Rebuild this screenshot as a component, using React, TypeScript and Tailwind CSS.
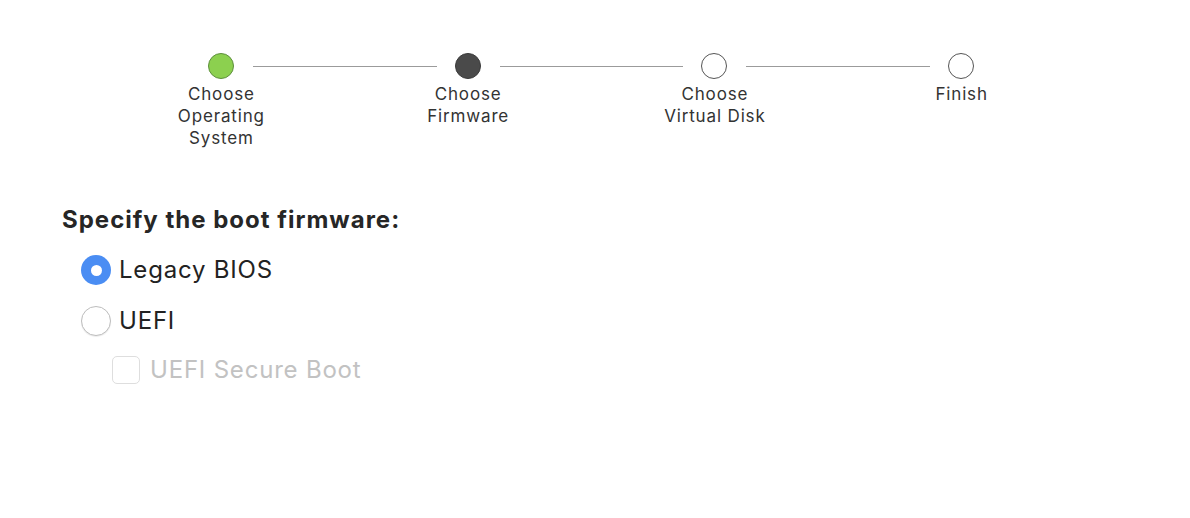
import React from "react";

const steps = [
  { label: ["Choose", "Operating", "System"], state: "done" },
  { label: ["Choose", "Firmware"], state: "current" },
  { label: ["Choose", "Virtual Disk"], state: "todo" },
  { label: ["Finish"], state: "todo" },
];

function StepDot({ state }: { state: string }) {
  if (state === "done") {
    return <div className="w-[26px] h-[26px] shrink-0 rounded-full bg-[#8cd04f] border border-[#5d8f3c]" />;
  }
  if (state === "current") {
    return <div className="w-[26px] h-[26px] shrink-0 rounded-full bg-[#4a4a4a] border border-[#3a3a3a]" />;
  }
  return <div className="w-[26px] h-[26px] shrink-0 rounded-full bg-white border border-[#555555]" />;
}

export default function App() {
  return (
    <div
      className="w-[1190px] h-[518px] bg-white text-[#262626] overflow-hidden"
      style={{ fontFamily: "Inter, 'Noto Sans', sans-serif" }}
    >
      {/* step indicator */}
      <div className="grid grid-cols-4 w-[987px] ml-[98px] pt-[53px]">
        {steps.map((step, i) => (
          <div key={i} className="flex flex-col items-center">
            <div className="flex items-center w-full">
              <div className="flex-1 mr-[18px]">
                {i > 0 && <div className="h-px bg-[#9b9b9b]" />}
              </div>
              <StepDot state={step.state} />
              <div className="flex-1 ml-[19px]">
                {i < steps.length - 1 && <div className="h-px bg-[#9b9b9b]" />}
              </div>
            </div>
            <div className="mt-[4px] text-[17px] leading-[22px] text-center text-[#333333] tracking-[0.85px]">
              {step.label.map((l) => (
                <div key={l}>{l}</div>
              ))}
            </div>
          </div>
        ))}
      </div>

      {/* firmware options */}
      <div className="pl-[62px] mt-[56px]">
        <h2 className="text-[24px] leading-[30px] font-bold text-[#262626] tracking-[1px]">Specify the boot firmware:</h2>

        <div className="flex flex-col mt-[20px] ml-[19px]">
          <label className="flex items-center gap-[8px] h-[30px]">
            <span className="w-[30px] h-[30px] rounded-full bg-[#4a8df3] flex items-center justify-center">
              <span className="w-[11px] h-[11px] rounded-full bg-white" />
            </span>
            <span className="text-[24px] leading-[30px] text-[#222222] tracking-[0.8px]">Legacy BIOS</span>
          </label>

          <label className="flex items-center gap-[8px] h-[30px] mt-[21px]">
            <span className="w-[30px] h-[30px] rounded-full bg-white border border-[#bdbdbd] shadow-[0_1px_1px_rgba(0,0,0,0.08)]" />
            <span className="text-[24px] leading-[30px] text-[#222222] tracking-[0.8px]">UEFI</span>
          </label>

          <label className="flex items-center gap-[10px] h-[28px] mt-[20px] ml-[31px]">
            <span className="w-[28px] h-[28px] rounded-[5px] bg-white border border-[#dedede]" />
            <span className="text-[24px] leading-[30px] text-[#c2c2c2] tracking-[0.8px]">UEFI Secure Boot</span>
          </label>
        </div>
      </div>
    </div>
  );
}
